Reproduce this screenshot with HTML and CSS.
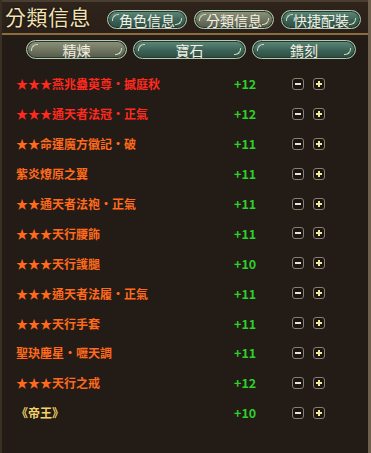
FILE: index.html
```html
<!DOCTYPE html>
<html>
<head>
<meta charset="utf-8">
<link rel="stylesheet" href="styles.css">
</head>
<body>
<div class="frame">
  <header class="top">
    <div class="title">分類信息</div>
    <nav class="tabs">
      <span class="tab">角色信息</span>
      <span class="tab sel">分類信息</span>
      <span class="tab">快捷配裝</span>
    </nav>
  </header>
  <nav class="subtabs">
    <span class="stab sel">精煉</span>
    <span class="stab">寶石</span>
    <span class="stab">鐫刻</span>
  </nav>
  <ul class="list">
    <li class="row"><span class="name red">★★★燕兆蠱萸尊・撼庭秋</span><span class="lv">+12</span><span class="btns"><i class="b minus"></i><i class="b plus"></i></span></li>
    <li class="row"><span class="name red">★★★通天者法冠・正氣</span><span class="lv">+12</span><span class="btns"><i class="b minus"></i><i class="b plus"></i></span></li>
    <li class="row"><span class="name org">★★命運魔方徽記・破</span><span class="lv">+11</span><span class="btns"><i class="b minus"></i><i class="b plus"></i></span></li>
    <li class="row"><span class="name org">紫炎燎原之翼</span><span class="lv">+11</span><span class="btns"><i class="b minus"></i><i class="b plus"></i></span></li>
    <li class="row"><span class="name org">★★通天者法袍・正氣</span><span class="lv">+11</span><span class="btns"><i class="b minus"></i><i class="b plus"></i></span></li>
    <li class="row"><span class="name org">★★★天行腰飾</span><span class="lv">+11</span><span class="btns"><i class="b minus"></i><i class="b plus"></i></span></li>
    <li class="row"><span class="name org">★★★天行護腿</span><span class="lv">+10</span><span class="btns"><i class="b minus"></i><i class="b plus"></i></span></li>
    <li class="row"><span class="name org">★★★通天者法履・正氣</span><span class="lv">+11</span><span class="btns"><i class="b minus"></i><i class="b plus"></i></span></li>
    <li class="row"><span class="name org">★★★天行手套</span><span class="lv">+11</span><span class="btns"><i class="b minus"></i><i class="b plus"></i></span></li>
    <li class="row"><span class="name org">聖玦塵星・嚦天調</span><span class="lv">+11</span><span class="btns"><i class="b minus"></i><i class="b plus"></i></span></li>
    <li class="row"><span class="name org">★★★天行之戒</span><span class="lv">+12</span><span class="btns"><i class="b minus"></i><i class="b plus"></i></span></li>
    <li class="row"><span class="name gold">《帝王》</span><span class="lv">+10</span><span class="btns"><i class="b minus"></i><i class="b plus"></i></span></li>
  </ul>
</div>
</body>
</html>
```
FILE: styles.css
```css
* { box-sizing: border-box; }
html, body { margin: 0; padding: 0; }
body {
  width: 371px;
  height: 453px;
  background: #221a15;
  font-family: "Noto Sans CJK TC", "Noto Sans CJK SC", sans-serif;
  overflow: hidden;
}
.frame {
  width: 371px;
  height: 453px;
  border-left: 2px solid #3a2f25;
  border-right: 3px solid #6e604c;
  background: #231b16;
}
.top {
  height: 35px;
  display: flex;
  align-items: flex-end;
  padding: 0 0 4px 3px;
  background: linear-gradient(#2e241c, #2a2019);
  border-top: 2px solid #4a3e30;
  border-bottom: 2px solid #8c6c3c;
}
.title {
  color: #f3e2b4;
  font-size: 21px;
  line-height: 26px;
  letter-spacing: 0.5px;
  text-shadow: 0 0 2px #000;
}
.tabs {
  display: flex;
  gap: 7px;
  margin-left: 16px;
  padding-bottom: 0;
}
.tab, .stab {
  display: flex;
  align-items: center;
  justify-content: center;
  color: #f4f1e4;
  border: 1px solid #b9c9ad;
  border-radius: 10px;
  background: linear-gradient(#5f8a7c, #3c6256 55%, #2d4c43);
  box-shadow: inset 0 0 0 1px #22392f;
  position: relative;
}
.tab::before, .stab::before {
  content: "";
  position: absolute;
  left: 4px; top: 3px;
  width: 6px; height: 6px;
  border-left: 1px solid #cfdcc2;
  border-top: 1px solid #cfdcc2;
  border-radius: 6px 0 0 0;
}
.tab::after, .stab::after {
  content: "";
  position: absolute;
  right: 4px; bottom: 3px;
  width: 6px; height: 6px;
  border-right: 1px solid #cfdcc2;
  border-bottom: 1px solid #cfdcc2;
  border-radius: 0 0 6px 0;
}
.tab {
  width: 80px;
  height: 19px;
  font-size: 14px;
}
.tab.sel, .stab.sel {
  background: linear-gradient(#8e927a, #6e7460 55%, #555a48);
}
.subtabs {
  display: flex;
  gap: 6px;
  padding: 5px 0 0 24px;
  height: 26px;
}
.stab {
  height: 19px;
  font-size: 14px;
}
.stab:nth-child(1) { width: 101px; }
.stab:nth-child(2) { width: 113px; }
.stab:nth-child(3) { width: 104px; }
.list {
  list-style: none;
  margin: 0;
  padding: 8px 0 0 14px;
}
.row {
  display: flex;
  align-items: center;
  height: 29.9px;
  font-size: 12px;
  font-weight: bold;
}
.name { width: 218px; }
.red { color: #ff2a1e; }
.org { color: #ff6a1c; }
.gold { color: #f2d46a; }
.lv { width: 58px; color: #2cd12a; font-size: 12.5px; }
.btns { display: flex; gap: 9px; }
.b {
  width: 12px;
  height: 12px;
  border: 1px solid #8a7f6c;
  border-radius: 3px;
  background: #1a1512;
  position: relative;
}
.b::before {
  content: "";
  position: absolute;
  left: 2px; top: 4px;
  width: 6px; height: 2px;
  background: #e8e4d8;
}
.plus::after {
  content: "";
  position: absolute;
  left: 4px; top: 2px;
  width: 2px; height: 6px;
  background: #f2ec9a;
}
.plus::before { background: #f2ec9a; }
```
